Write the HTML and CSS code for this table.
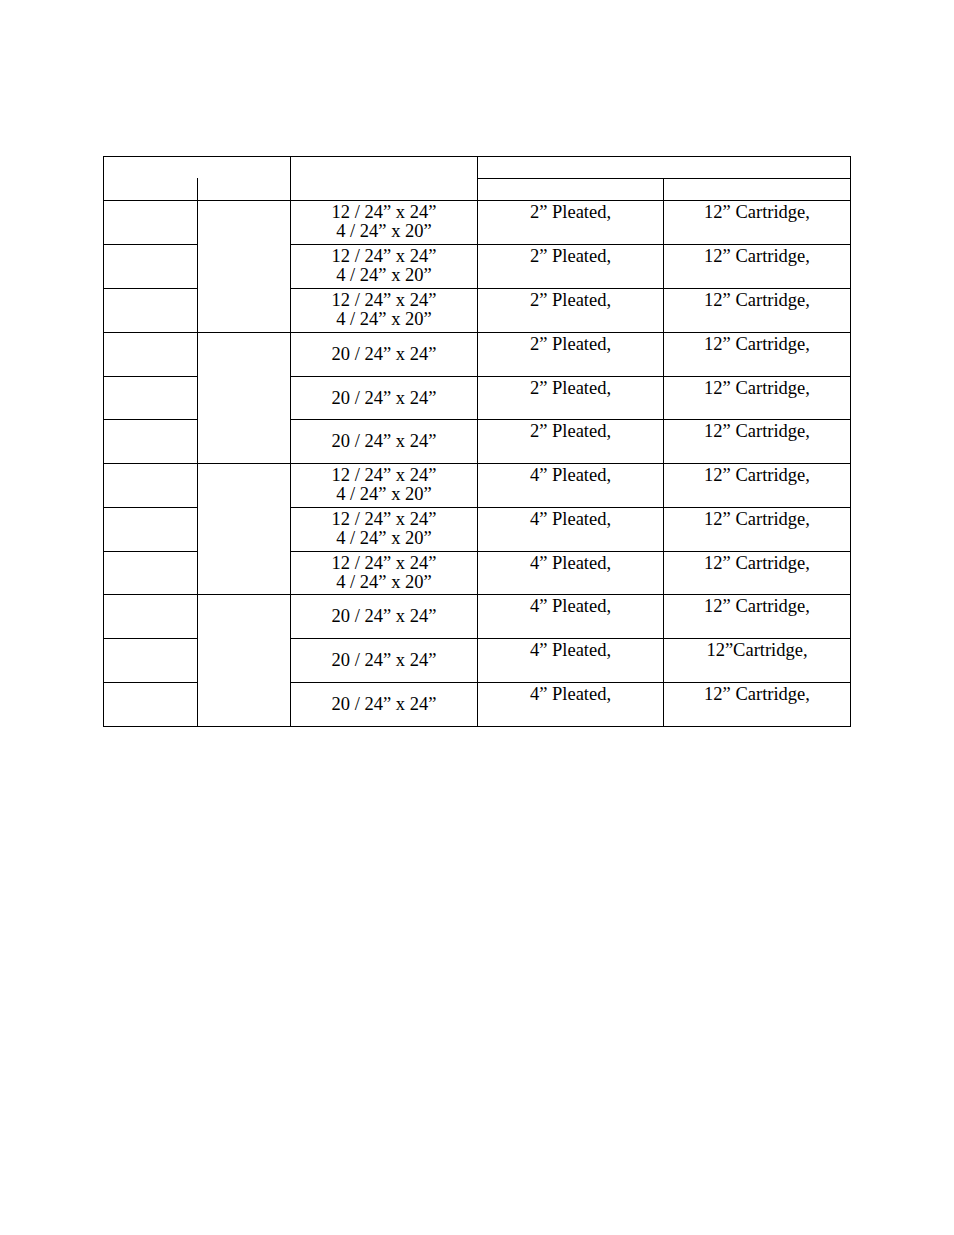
FILE: index.html
```html
<!DOCTYPE html>
<html lang="en">
<head>
<meta charset="utf-8">
<title>Filter table</title>
<link rel="stylesheet" href="styles.css">
</head>
<body>
<div class="sheet">
  <div class="cell head-left">
    <div class="head-left-top"></div>
    <div class="head-left-split"><div class="half"></div><div class="half"></div></div>
  </div>
  <div class="cell head-size"></div>
  <div class="cell head-filters"></div>
  <div class="cell"></div>
  <div class="cell"></div>

  <!-- group 1 -->
  <div class="cell"></div>
  <div class="cell group"></div>
  <div class="cell size two">12 / 24” x 24”<br>4 / 24” x 20”</div>
  <div class="cell txt">2” Pleated,</div>
  <div class="cell txt">12” Cartridge,</div>

  <div class="cell"></div>
  <div class="cell size two">12 / 24” x 24”<br>4 / 24” x 20”</div>
  <div class="cell txt">2” Pleated,</div>
  <div class="cell txt">12” Cartridge,</div>

  <div class="cell"></div>
  <div class="cell size two">12 / 24” x 24”<br>4 / 24” x 20”</div>
  <div class="cell txt">2” Pleated,</div>
  <div class="cell txt">12” Cartridge,</div>

  <!-- group 2 -->
  <div class="cell"></div>
  <div class="cell group"></div>
  <div class="cell size one">20 / 24” x 24”</div>
  <div class="cell txt">2” Pleated,</div>
  <div class="cell txt">12” Cartridge,</div>

  <div class="cell"></div>
  <div class="cell size one">20 / 24” x 24”</div>
  <div class="cell txt">2” Pleated,</div>
  <div class="cell txt">12” Cartridge,</div>

  <div class="cell"></div>
  <div class="cell size one">20 / 24” x 24”</div>
  <div class="cell txt">2” Pleated,</div>
  <div class="cell txt">12” Cartridge,</div>

  <!-- group 3 -->
  <div class="cell"></div>
  <div class="cell group"></div>
  <div class="cell size two">12 / 24” x 24”<br>4 / 24” x 20”</div>
  <div class="cell txt">4” Pleated,</div>
  <div class="cell txt">12” Cartridge,</div>

  <div class="cell"></div>
  <div class="cell size two">12 / 24” x 24”<br>4 / 24” x 20”</div>
  <div class="cell txt">4” Pleated,</div>
  <div class="cell txt">12” Cartridge,</div>

  <div class="cell"></div>
  <div class="cell size two">12 / 24” x 24”<br>4 / 24” x 20”</div>
  <div class="cell txt">4” Pleated,</div>
  <div class="cell txt">12” Cartridge,</div>

  <!-- group 4 -->
  <div class="cell"></div>
  <div class="cell group"></div>
  <div class="cell size one">20 / 24” x 24”</div>
  <div class="cell txt">4” Pleated,</div>
  <div class="cell txt">12” Cartridge,</div>

  <div class="cell"></div>
  <div class="cell size one">20 / 24” x 24”</div>
  <div class="cell txt">4” Pleated,</div>
  <div class="cell txt">12”Cartridge,</div>

  <div class="cell"></div>
  <div class="cell size one">20 / 24” x 24”</div>
  <div class="cell txt">4” Pleated,</div>
  <div class="cell txt">12” Cartridge,</div>
</div>
</body>
</html>
```
FILE: styles.css
```css
html, body {
  margin: 0;
  padding: 0;
  background: #ffffff;
}

body {
  font-family: "Liberation Serif", "Times New Roman", serif;
  font-size: 18.5px;
  line-height: 18.5px;
  color: #000000;
}

.sheet {
  display: grid;
  width: max-content;
  margin: 156px 0 0 103px;
  padding: 1px;
  gap: 1px;
  background: #000000;
  grid-template-columns: 93px 92px 186px 185px 186px;
  grid-template-rows:
    21px 21px
    43px 43px 43px
    43px 42px 43px
    43px 43px 42px
    43px 43px 43px;
}

.cell {
  background: #ffffff;
  min-width: 0;
  box-sizing: border-box;
}

.head-left {
  grid-column: span 2;
  grid-row: span 2;
  display: flex;
  flex-direction: column;
}

.head-left-top {
  flex: 1;
}

.head-left-split {
  height: 22px;
  display: flex;
}

.head-left-split .half:first-child {
  width: 93px;
  border-right: 1px solid #000000;
}

.head-size {
  grid-row: span 2;
}

.head-filters {
  grid-column: span 2;
}

.group {
  grid-row: span 3;
}

.txt {
  text-align: center;
  padding-top: 2px;
}

.size {
  text-align: center;
}

.size.two {
  padding-top: 2px;
}

.size.one {
  display: flex;
  align-items: center;
  justify-content: center;
}
```
